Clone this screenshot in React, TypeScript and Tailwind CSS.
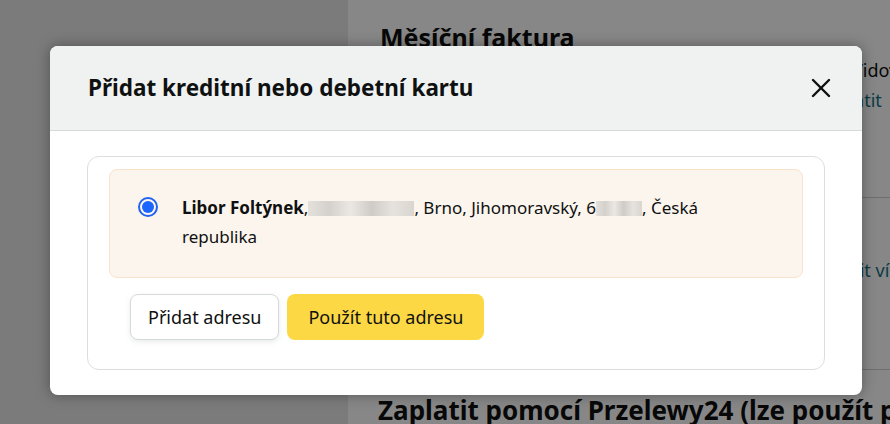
import { X } from 'lucide-react'

function Blur({ w }: { w: number }) {
  // pixelated redaction block
  return (
    <span
      className="inline-block h-[15px] align-[-2px] bg-[linear-gradient(90deg,#e4e0dc_0,#d4d0cc_20%,#ebe7e3_40%,#cfcbc7_60%,#e6e2de_80%,#d9d5d1_100%)]"
      style={{ width: w }}
    />
  )
}

export default function App() {
  return (
    <div className="relative w-[890px] h-[424px] overflow-hidden font-['Noto_Sans',sans-serif] text-[#0f1111]">
      {/* page behind the overlay */}
      <div className="flex h-full">
        <div className="w-[348px] shrink-0 bg-[#7b7b7b] shadow-[2px_0_6px_rgba(0,0,0,0.15)]" />
        <div className="flex-1 min-w-0 overflow-hidden bg-[#878787] pl-[32px] pt-[20px] text-[#080808]">
          <div className="text-[25px] font-bold leading-[34px]">Měsíční faktura</div>
          <div className="pl-[472px] mt-[2px] text-[18px] leading-[28px] whitespace-nowrap">Vidovat</div>
          <div className="pl-[438px] mt-[2px] text-[18px] leading-[28px] whitespace-nowrap text-[#0b3a44]">Zaplatit</div>
          <div className="ml-[482px] mt-[83px] border-t border-[#6e6e6e]" />
          <div className="pl-[445px] mt-[58px] text-[18px] leading-[28px] whitespace-nowrap text-[#0b3a44]">Zjistit více</div>
          <div className="ml-[482px] mt-[85px] border-t border-[#6e6e6e]" />
          <div className="mt-[23px] -ml-[2px] text-[26px] font-bold leading-[34px] whitespace-nowrap">
            Zaplatit pomocí Przelewy24 (lze použít platební karty)
          </div>
        </div>
      </div>

      {/* modal */}
      <div className="absolute left-[50px] top-[46px] w-[812px] h-[349px] rounded-[8px] bg-white overflow-hidden shadow-[0_0_14px_rgba(0,0,0,0.35)] flex flex-col">
        <div className="h-[85px] shrink-0 bg-[#f0f2f2] border-b border-[#d5d9d9] flex items-center justify-between pl-[38px] pr-[25px]">
          <h2 className="text-[22.5px] font-bold leading-[30px]">Přidat kreditní nebo debetní kartu</h2>
          <X size={32} strokeWidth={1.8} className="text-[#0f1111]" />
        </div>

        <div className="px-[37px] pt-[25px] pb-[25px] flex-1 flex">
          <div className="flex-1 border border-[#dddddd] rounded-[12px] px-[21px] pt-[12px]">
            <div className="h-[109px] rounded-[8px] bg-[#fcf5ee] border border-[#f8e2cc] flex pl-[28px] pr-[40px] pt-[23px]">
              <div className="w-[20px] h-[20px] mt-[4px] shrink-0 rounded-full border-[2px] border-[#2162f0] flex items-center justify-center">
                <div className="w-[12px] h-[12px] rounded-full bg-[#1a66ff]" />
              </div>
              <p className="ml-[24px] max-w-[560px] text-[17px] leading-[29px]">
                <span className="font-bold">Libor Foltýnek</span>,<Blur w={106} />, Brno, Jihomoravský, 6<Blur w={46} />, Česká republika
              </p>
            </div>

            <div className="flex gap-[8px] mt-[16px] pl-[21px]">
              <button className="h-[46px] px-[17px] rounded-[8px] bg-white border border-[#d5d9d9] shadow-[0_2px_5px_rgba(213,217,217,0.5)] text-[18px]">
                Přidat adresu
              </button>
              <button className="h-[46px] px-[21px] rounded-[8px] bg-[#fdd845] text-[18px]">
                Použít tuto adresu
              </button>
            </div>
          </div>
        </div>
      </div>
    </div>
  )
}
